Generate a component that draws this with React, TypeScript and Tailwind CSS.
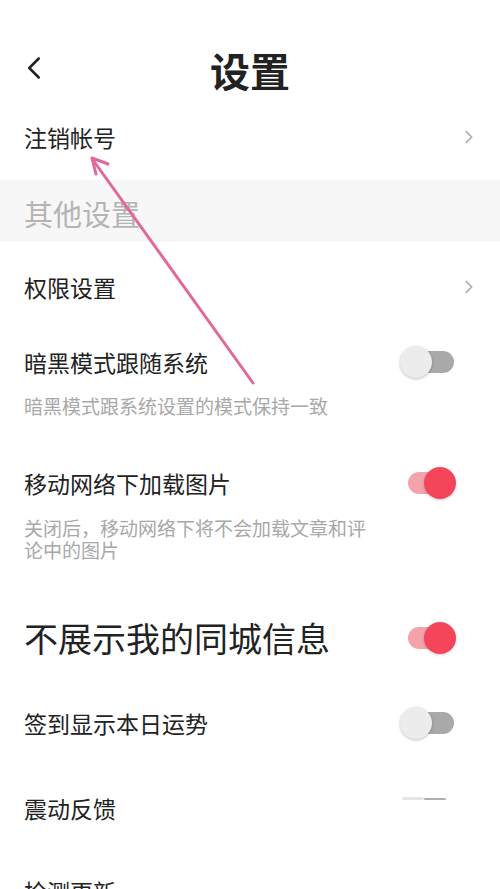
import { ChevronLeft, ChevronRight } from 'lucide-react';

const font = { fontFamily: '"Noto Sans CJK SC", "Noto Sans", sans-serif' };

function Toggle({ on }: { on: boolean }) {
  if (on) {
    return (
      <div className="relative w-[56px] h-[34px] shrink-0">
        <div className="absolute left-[4px] top-[6px] w-[40px] h-[22px] rounded-full bg-[#f4a3ab]" />
        <div className="absolute left-[20px] top-[1px] w-[32px] h-[32px] rounded-full bg-[#f5455a] shadow-[0_1px_3px_rgba(0,0,0,0.2)]" />
      </div>
    );
  }
  return (
    <div className="relative w-[56px] h-[34px] shrink-0">
      <div className="absolute left-[12px] top-[6px] w-[42px] h-[22px] rounded-full bg-[#a9a9a9]" />
      <div className="absolute left-[0px] top-[1px] w-[32px] h-[32px] rounded-full bg-[#ececec] shadow-[0_1px_3px_rgba(0,0,0,0.25)]" />
    </div>
  );
}

function LinkRow({ label, h }: { label: string; h: string }) {
  return (
    <div className={`flex items-center justify-between pl-[24px] pr-[20px] ${h}`}>
      <span className="text-[23px] leading-[30px] text-[#222]">{label}</span>
      <ChevronRight className="w-[22px] h-[22px] text-[#aaa]" strokeWidth={1.8} />
    </div>
  );
}

export default function App() {
  return (
    <div className="relative w-[500px] h-[889px] bg-white overflow-hidden" style={font}>
      <header className="relative h-[95px] pt-[45px] flex justify-center">
        <ChevronLeft className="absolute left-[15px] top-[49px] w-[38px] h-[38px] text-[#222]" strokeWidth={1.6} />
        <h1 className="text-[40px] leading-[50px] font-bold text-[#222]">设置</h1>
      </header>

      <LinkRow label="注销帐号" h="h-[85px] pb-[2px]" />

      <div className="h-[62px] bg-[#f7f7f7] flex items-center pl-[24px] pt-[4px]">
        <span className="text-[29px] leading-[36px] text-[#b4b4b4]">其他设置</span>
      </div>

      <LinkRow label="权限设置" h="h-[90px]" />

      <div className="pl-[24px] pr-[44px] pt-[15px]">
        <div className="flex items-center justify-between h-[30px]">
          <span className="text-[23px] leading-[30px] text-[#222]">暗黑模式跟随系统</span>
          <Toggle on={false} />
        </div>
        <p className="mt-[18px] text-[19px] leading-[22px] text-[#a8a8a8]">暗黑模式跟系统设置的模式保持一致</p>
      </div>

      <div className="pl-[24px] pr-[40px] pt-[51px]">
        <div className="flex items-center justify-between h-[30px]">
          <span className="text-[23px] leading-[30px] text-[#222]">移动网络下加载图片</span>
          <Toggle on />
        </div>
        <p className="mt-[19px] w-[350px] text-[19px] leading-[22px] text-[#a8a8a8]">关闭后，移动网络下将不会加载文章和评论中的图片</p>
      </div>

      <div className="pl-[24px] pr-[40px] pt-[55px] flex items-center justify-between h-[99px]">
        <span className="text-[34px] leading-[44px] text-[#222]">不展示我的同城信息</span>
        <Toggle on />
      </div>

      <div className="pl-[24px] pr-[44px] flex items-center justify-between h-[85px] pt-[40px]">
        <span className="text-[23px] leading-[30px] text-[#222]">签到显示本日运势</span>
        <Toggle on={false} />
      </div>

      <div className="relative pl-[24px] pr-[44px] flex items-center h-[86px] pt-[40px]">
        <span className="text-[23px] leading-[30px] text-[#222]">震动反馈</span>
        <div className="absolute left-[402px] top-[51px] w-[50px] h-[4px] flex items-center">
          <div className="w-[22px] h-[3px] rounded-full bg-[#e6e6e6]" />
          <div className="w-[22px] h-[2px] mt-[2px] rounded-full bg-[#b0b0b0]" />
        </div>
      </div>

      <div className="pl-[24px] pt-[45px]">
        <span className="block text-[23px] leading-[30px] text-[#222]">检测更新</span>
      </div>

      <svg className="absolute left-0 top-0 pointer-events-none" width="500" height="889" viewBox="0 0 500 889">
        <line x1="253" y1="383" x2="93" y2="160" stroke="#e2679b" strokeWidth="3" strokeLinecap="round" />
        <polyline points="96,174 92,158 108,164" fill="none" stroke="#e2679b" strokeWidth="3" strokeLinecap="round" strokeLinejoin="round" />
      </svg>
    </div>
  );
}
